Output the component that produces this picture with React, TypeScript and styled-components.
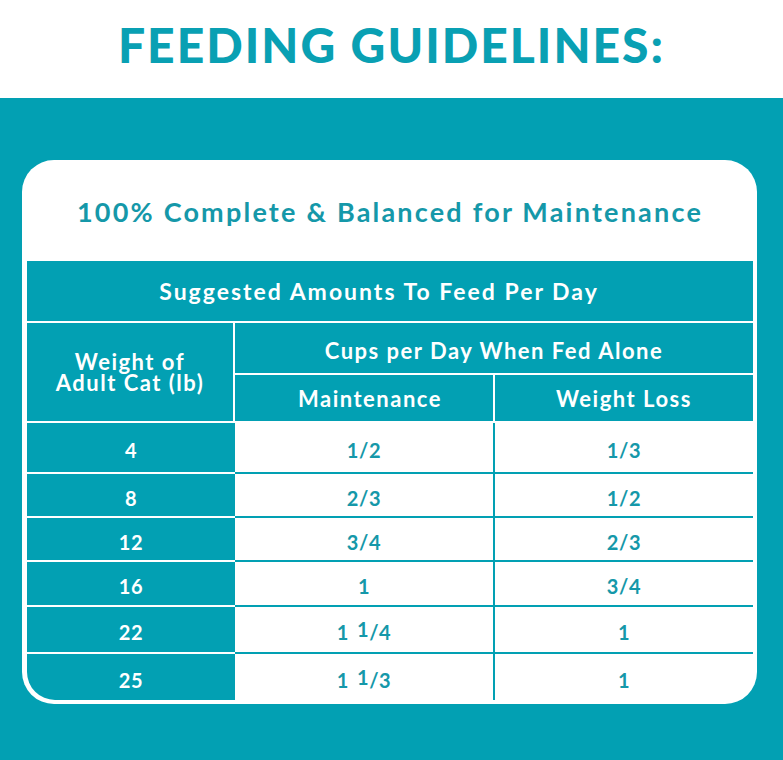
import React from 'react'
import styled, { createGlobalStyle } from 'styled-components'

const TEAL = '#02a0b3'
const INK = '#1598a9'

const GlobalStyle = createGlobalStyle`
  html, body {
    margin: 0;
    padding: 0;
    background: #ffffff;
  }
  body {
    font-family: Lato, "Open Sans", sans-serif;
  }
`

const Page = styled.div`
  width: 783px;
  height: 760px;
  display: flex;
  flex-direction: column;
  overflow: hidden;
`

const TitleBar = styled.header`
  height: 98px;
  box-sizing: border-box;
  padding-bottom: 10px;
  display: flex;
  align-items: center;
  justify-content: center;
  background: #ffffff;
`

const Title = styled.h1`
  margin: 0;
  font-size: 48px;
  font-weight: 900;
  letter-spacing: 2px;
  color: #09a0b3;
`

const Band = styled.section`
  flex: 1;
  background: ${TEAL};
  padding: 62px 26px 0 22px;
`

const Card = styled.div`
  height: 544px;
  box-sizing: border-box;
  background: #ffffff;
  border-radius: 32px;
  padding: 0 4px 4px 5px;
  display: flex;
  flex-direction: column;
`

const CardHeading = styled.h2`
  margin: 0;
  height: 101px;
  display: flex;
  align-items: center;
  justify-content: center;
  padding-top: 2px;
  box-sizing: border-box;
  font-size: 27px;
  font-weight: 700;
  letter-spacing: 2.2px;
  color: ${INK};
`

const Grid = styled.div`
  display: grid;
  grid-template-columns: 208px 260px 258px;
  grid-template-rows: 62px 52px 48px 51px 44px 44px 45px 47px 46px;
  border-radius: 0 0 28px 28px;
  overflow: hidden;
`

type Tone = 'teal' | 'white'

const Cell = styled.div<{ $tone: Tone; $right?: boolean; $bottom?: boolean }>`
  box-sizing: border-box;
  display: flex;
  align-items: center;
  justify-content: center;
  text-align: center;
  padding-top: 6px;
  font-size: 20px;
  font-weight: 700;
  letter-spacing: 0.6px;
  line-height: 21px;
  background: ${(p) => (p.$tone === 'teal' ? TEAL : '#ffffff')};
  color: ${(p) => (p.$tone === 'teal' ? '#ffffff' : INK)};
  border-right: ${(p) =>
    p.$right ? `2px solid ${p.$tone === 'teal' ? '#ffffff' : TEAL}` : 'none'};
  border-bottom: ${(p) =>
    p.$bottom ? `2px solid ${p.$tone === 'teal' ? '#ffffff' : TEAL}` : 'none'};
`

// header cells: $shift nudges the label off-centre the way the printed table does
const HeadCell = styled(Cell)<{ $big?: boolean; $shift?: number; $drop?: number }>`
  font-size: ${(p) => (p.$big ? '23px' : '22px')};
  letter-spacing: ${(p) => (p.$big ? '2px' : '1.5px')};
  line-height: 21px;
  padding-top: ${(p) => p.$drop ?? 0}px;
  padding-left: ${(p) => Math.max(p.$shift ?? 0, 0)}px;
  padding-right: ${(p) => Math.max(-(p.$shift ?? 0), 0)}px;
`

const Raised = styled.span`
  position: relative;
  top: -3px;
  margin-left: 8px;
`

type Amount = { whole?: string; frac?: [string, string] }

const rows: { weight: string; maint: Amount; loss: Amount }[] = [
  { weight: '4', maint: { frac: ['1', '2'] }, loss: { frac: ['1', '3'] } },
  { weight: '8', maint: { frac: ['2', '3'] }, loss: { frac: ['1', '2'] } },
  { weight: '12', maint: { frac: ['3', '4'] }, loss: { frac: ['2', '3'] } },
  { weight: '16', maint: { whole: '1' }, loss: { frac: ['3', '4'] } },
  { weight: '22', maint: { whole: '1', frac: ['1', '4'] }, loss: { whole: '1' } },
  { weight: '25', maint: { whole: '1', frac: ['1', '3'] }, loss: { whole: '1' } },
]

function AmountText({ a }: { a: Amount }) {
  if (a.whole && a.frac) {
    return (
      <span>
        {a.whole}
        <Raised>{a.frac[0]}</Raised>/{a.frac[1]}
      </span>
    )
  }
  if (a.frac) return <span>{`${a.frac[0]}/${a.frac[1]}`}</span>
  return <span>{a.whole}</span>
}

export default function App() {
  return (
    <Page>
      <GlobalStyle />
      <TitleBar>
        <Title>FEEDING GUIDELINES:</Title>
      </TitleBar>
      <Band>
        <Card>
          <CardHeading>100% Complete &amp; Balanced for Maintenance</CardHeading>
          <Grid>
            <HeadCell $tone="teal" $big $bottom $shift={-22} style={{ gridColumn: '1 / 4' }}>
              Suggested Amounts To Feed Per Day
            </HeadCell>
            <HeadCell $tone="teal" $right $bottom style={{ gridRow: '2 / 4' }}>
              Weight of
              <br />
              Adult Cat (lb)
            </HeadCell>
            <HeadCell $tone="teal" $bottom $drop={5} style={{ gridColumn: '2 / 4' }}>
              Cups per Day When Fed Alone
            </HeadCell>
            <HeadCell $tone="teal" $right $bottom $shift={12}>
              Maintenance
            </HeadCell>
            <HeadCell $tone="teal" $bottom>
              Weight Loss
            </HeadCell>
            {rows.map((r, i) => {
              const last = i === rows.length - 1
              return (
                <React.Fragment key={r.weight}>
                  <Cell $tone="teal" $bottom={!last}>
                    {r.weight}
                  </Cell>
                  <Cell $tone="white" $right $bottom={!last}>
                    <AmountText a={r.maint} />
                  </Cell>
                  <Cell $tone="white" $bottom={!last}>
                    <AmountText a={r.loss} />
                  </Cell>
                </React.Fragment>
              )
            })}
          </Grid>
        </Card>
      </Band>
    </Page>
  )
}
